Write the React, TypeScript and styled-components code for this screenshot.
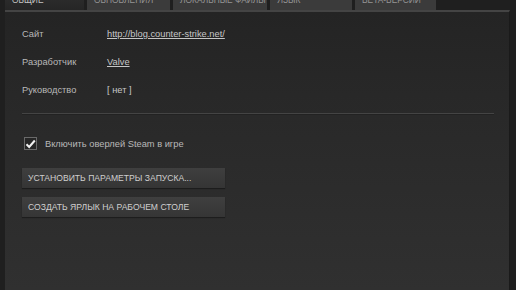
import React from "react";
import styled, { createGlobalStyle } from "styled-components";

const GlobalStyle = createGlobalStyle`
  html, body {
    margin: 0;
    padding: 0;
    background: #1c1c1c;
    font-family: "Liberation Sans", Arial, sans-serif;
  }
`;

const Window = styled.div`
  width: 516px;
  height: 290px;
  display: flex;
  flex-direction: column;
  overflow: hidden;
  background: #1f1f1f;
`;

const TabBar = styled.div`
  display: flex;
  gap: 3px;
  margin-top: -8px;
  padding-left: 5px;
  height: 18px;
`;

const Tab = styled.div<{ $active?: boolean; $width: number }>`
  width: ${(p) => p.$width}px;
  height: 18px;
  padding-left: 7px;
  box-sizing: border-box;
  font-size: 8.4px;
  line-height: 16px;
  white-space: nowrap;
  overflow: hidden;
  color: ${(p) => (p.$active ? "#c4c4c4" : "#959595")};
  background: ${(p) =>
    p.$active ? "linear-gradient(#2e2e2e, #262626)" : "#3b3b3b"};
  text-transform: uppercase;
`;

const Panel = styled.div`
  flex: 1;
  margin: 0 6px 0 5px;
  padding: 16px 17px 0 17px;
  border-top: 2px solid #444;
  border-right: 1px solid #1a1a1a;
  background: linear-gradient(#242424, #2a2a2a 45%, #303030);
  display: flex;
  flex-direction: column;
`;

const InfoGrid = styled.div`
  display: grid;
  grid-template-columns: 85px 1fr;
  row-gap: 16px;
  font-size: 9.3px;
  line-height: 12px;
`;

const Label = styled.div`
  color: #b9b9b9;
`;

const Value = styled.a<{ $plain?: boolean }>`
  color: #c6c6c6;
  text-decoration: ${(p) => (p.$plain ? "none" : "underline")};
  justify-self: start;
`;

const Divider = styled.div`
  height: 1px;
  background: #444;
  margin: 17px -2px 0 0;
  box-shadow: 0 1px 0 #222;
`;

const CheckRow = styled.label`
  display: flex;
  align-items: center;
  gap: 8px;
  margin-top: 23px;
  margin-left: 2px;
  font-size: 9.3px;
  color: #b9b9b9;
`;

const Box = styled.span`
  width: 11px;
  height: 11px;
  border: 1px solid #6a6a6a;
  background: #262626;
  display: flex;
  align-items: center;
  justify-content: center;
`;

const Buttons = styled.div`
  display: flex;
  flex-direction: column;
  gap: 9px;
  margin-top: 18px;
`;

const Button = styled.div`
  width: 203px;
  height: 20px;
  box-sizing: border-box;
  padding-left: 6px;
  font-size: 8.6px;
  line-height: 20px;
  color: #cfcfcf;
  white-space: nowrap;
  text-transform: uppercase;
  background: linear-gradient(#3f3f3f, #353535);
  box-shadow: 0 1px 1px rgba(0, 0, 0, 0.35);
`;

const tabs = [
  { name: "Общие", width: 79, active: true },
  { name: "Обновления", width: 83 },
  { name: "Локальные файлы", width: 94 },
  { name: "Язык", width: 82 },
  { name: "Beta-версии", width: 81 },
];

const App = () => {
  return (
    <Window>
      <GlobalStyle />
      <TabBar>
        {tabs.map((t) => (
          <Tab key={t.name} $active={t.active} $width={t.width}>
            {t.name}
          </Tab>
        ))}
      </TabBar>
      <Panel>
        <InfoGrid>
          <Label>Сайт</Label>
          <Value href="#">http://blog.counter-strike.net/</Value>
          <Label>Разработчик</Label>
          <Value href="#">Valve</Value>
          <Label>Руководство</Label>
          <Value $plain>[ нет ]</Value>
        </InfoGrid>
        <Divider />
        <CheckRow>
          <Box>
            <svg width="11" height="10" viewBox="0 0 11 10">
              <path
                d="M1.5 5.2 L4.2 8 L9.8 1.5"
                fill="none"
                stroke="#f2f2f2"
                strokeWidth="2"
              />
            </svg>
          </Box>
          Включить оверлей Steam в игре
        </CheckRow>
        <Buttons>
          <Button>Установить параметры запуска...</Button>
          <Button>Создать ярлык на рабочем столе</Button>
        </Buttons>
      </Panel>
    </Window>
  );
};

export default App;
